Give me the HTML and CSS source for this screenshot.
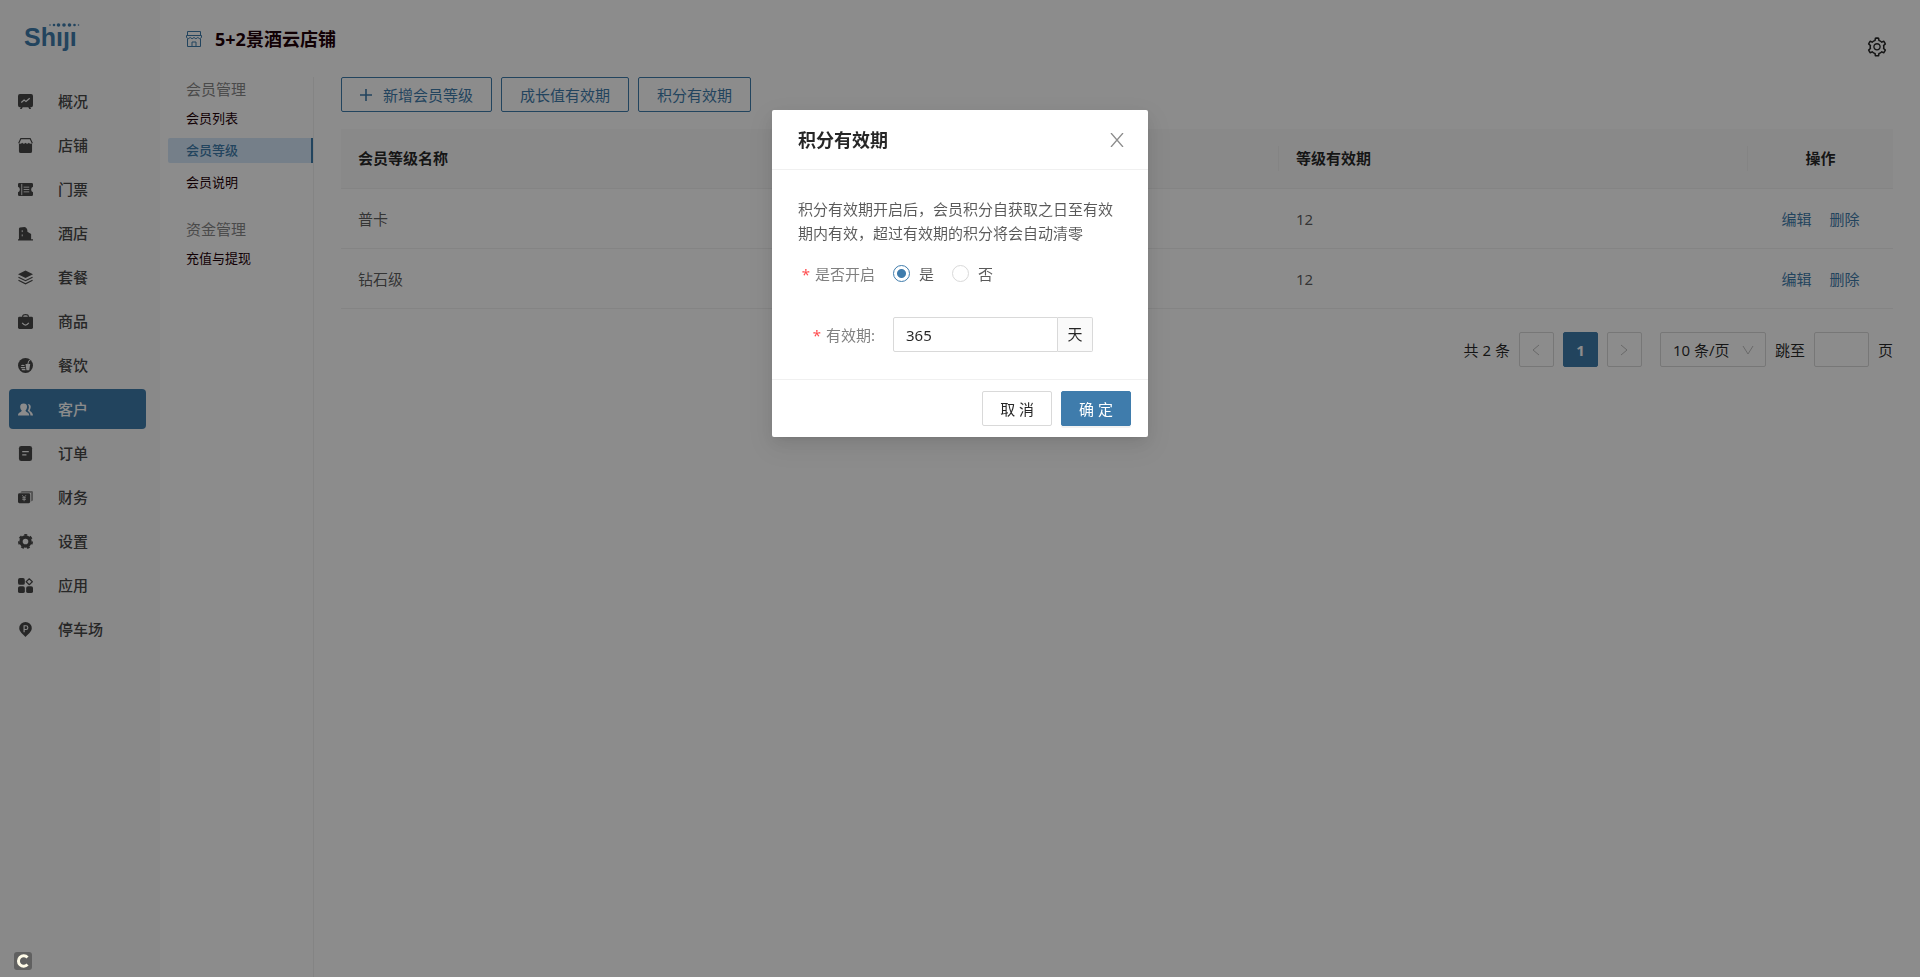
FILE: index.html
```html
<!DOCTYPE html>
<html lang="zh-CN">

<head>
    <meta charset="UTF-8">
    <meta name="viewport" content="width=device-width, initial-scale=1.0">
    <title>会员等级</title>
    <link rel="stylesheet" href="styles.css">
</head>

<body>
    <div class="layout">
        <aside class="sidebar">
            <svg class="logo" viewBox="0 0 70 40" role="img" aria-label="Shiji">
                <text class="logo-text" x="0" y="25">Shıȷı</text>
                <g fill="#3f7cac">
                    <circle cx="26" cy="4" r=".8"/>
                    <circle cx="30" cy="4" r="1.3"/>
                    <circle cx="34.5" cy="4" r="1.8"/>
                    <circle cx="40" cy="4" r="1.8"/>
                    <circle cx="45.5" cy="4" r="1.8"/>
                    <circle cx="50.5" cy="4" r="1.3"/>
                    <circle cx="54.5" cy="4" r=".8"/>
                </g>
            </svg>
            <nav class="menu">
                <a class="menu-item" href="#">
                    <svg viewBox="0 0 16 16"><path fill="currentColor" d="M2 0h12a2 2 0 0 1 2 2v10a2 2 0 0 1-2 2h-1l1 2h-2l-1-2H5l-1 2H2l1-2H2a2 2 0 0 1-2-2V2a2 2 0 0 1 2-2z"/><path d="M3.5 9l3-2.500 2 1.500 4-3.500" fill="none" stroke="#fafafa" stroke-width="1.300"/></svg>
                    <span>概况</span>
                </a>
                <a class="menu-item" href="#">
                    <svg viewBox="0 0 16 16"><path d="M.7 5.500L3 .7h10l2.300 4.800" fill="none" stroke="currentColor" stroke-width="1.200"/><path fill="currentColor" d="M1 5.500q1.800 1.500 3.500-.5 1.700 2 3.500 0 1.800 2 3.500 0 1.700 2 3.500.5V14a2 2 0 0 1-2 2H3a2 2 0 0 1-2-2z"/></svg>
                    <span>店铺</span>
                </a>
                <a class="menu-item" href="#">
                    <svg viewBox="0 0 16 16"><path fill="currentColor" d="M1.500 1h13A1.500 1.500 0 0 1 16 2.500V5q-2 .8-2 3t2 3v2.500a1.500 1.500 0 0 1-1.500 1.500h-13A1.500 1.500 0 0 1 0 13.500V11q2-.8 2-3T0 5V2.500A1.500 1.500 0 0 1 1.500 1z"/><path d="M6 5.500h6M6 8h6M6 10.500h6M4 2v12" stroke="#fafafa" stroke-width=".9"/></svg>
                    <span>门票</span>
                </a>
                <a class="menu-item" href="#">
                    <svg viewBox="0 0 16 16"><path fill="currentColor" d="M1 14V3q0-1 1-1.300L7 1q3 1 3 4v1l4 2.500V14h2v1.500H0V14z"/><path d="M4.500 4.500v2M4.500 9v2" stroke="#fafafa" stroke-width="1"/></svg>
                    <span>酒店</span>
                </a>
                <a class="menu-item" href="#">
                    <svg viewBox="0 0 16 16"><path fill="currentColor" d="M8 .5l8 4-8 4-8-4z"/><path d="M.5 7.700L8 11.400l7.500-3.700M.5 11L8 14.700 15.500 11" fill="none" stroke="currentColor" stroke-width="1.300"/></svg>
                    <span>套餐</span>
                </a>
                <a class="menu-item" href="#">
                    <svg viewBox="0 0 16 16"><path d="M5 4V2.500Q5 .7 8 .7t3 1.800V4" fill="none" stroke="currentColor" stroke-width="1.200"/><rect y="3" width="16" height="13" rx="1.500" fill="currentColor"/><path d="M4.500 9.500q3.500 4.500 7 0" fill="none" stroke="#fafafa" stroke-width="1.300"/></svg>
                    <span>商品</span>
                </a>
                <a class="menu-item" href="#">
                    <svg viewBox="0 0 16 16"><circle cx="8" cy="8" r="8" fill="currentColor"/><path fill="#fafafa" d="M8 6.500h5l-1 6.500H9zM3 8.500q2-2.500 4.500 0zM3 9.700h4.700v1H3zM3.500 11.500h4.300l.2 1.500H4.500z"/><path d="M10.500 6.500L11.500 3l1.500-.5" fill="none" stroke="#fafafa"/></svg>
                    <span>餐饮</span>
                </a>
                <a class="menu-item active" href="#">
                    <svg viewBox="0 0 16 16"><path fill="currentColor" d="M6 1.500c5 0 4 5.500 2 7.500 0 2 4 1.500 4 5.500H0c0-4 4-3.500 4-5.500-2-2-3-7.500 2-7.500z"/><path fill="currentColor" d="M10.500 2c4 0 3.500 4.500 2 6.500 0 2 3.500 2 3.500 6h-2.700c0-3-1.800-4-3-5.200 1.500-2 2-5 .2-7.300z"/></svg>
                    <span>客户</span>
                </a>
                <a class="menu-item" href="#">
                    <svg viewBox="0 0 16 16"><rect x="1" width="14" height="16" rx="2.500" fill="currentColor"/><path d="M4.500 6h7M4.500 9.500H9" stroke="#fafafa" stroke-width="1.300"/></svg>
                    <span>订单</span>
                </a>
                <a class="menu-item" href="#">
                    <svg viewBox="0 0 16 16"><path fill="currentColor" opacity=".55" d="M4 1h10.500A1.500 1.500 0 0 1 16 2.500v8a1.500 1.500 0 0 1-1.500 1.500H14V4q0-1-1-1H2.500z"/><rect y="3.500" width="13" height="10.500" rx="1.500" fill="currentColor"/><path d="M4.500 5.500l2 2.500 2-2.500M4.500 8.300h4M4.500 10h4M6.500 8v4" fill="none" stroke="#fafafa" stroke-width=".8"/></svg>
                    <span>财务</span>
                </a>
                <a class="menu-item" href="#">
                    <svg viewBox="0 0 16 16"><circle cx="8" cy="8" r="4.800" fill="none" stroke="currentColor" stroke-width="3.600"/><circle cx="8" cy="8" r="7.100" fill="none" stroke="currentColor" stroke-width="1.800" stroke-dasharray="3.200 3.173"/></svg>
                    <span>设置</span>
                </a>
                <a class="menu-item" href="#">
                    <svg viewBox="0 0 16 16"><g fill="currentColor"><rect width="7.300" height="7.300" rx="2"/><rect y="8.700" width="7.300" height="7.300" rx="2"/><rect x="8.700" y="8.700" width="7.300" height="7.300" rx="2"/></g><path d="M12 .8L15.300 4 12 7.200 8.700 4z" fill="none" stroke="currentColor" stroke-width="1.200" stroke-linejoin="round"/></svg>
                    <span>应用</span>
                </a>
                <a class="menu-item" href="#">
                    <svg viewBox="0 0 16 16"><path fill="currentColor" d="M8 0a6.700 6.700 0 0 1 6.700 6.700C14.700 10.500 10.500 13 8 16 5.500 13 1.300 10.500 1.300 6.700A6.700 6.700 0 0 1 8 0z"/><path d="M6.500 11V4h2a2 2 0 0 1 0 4h-2" fill="none" stroke="#fafafa" stroke-width="1.200"/></svg>
                    <span>停车场</span>
                </a>
            </nav>
        </aside>

        <div class="page">
            <header class="header">
                <svg class="shop-icon" viewBox="0 0 16 16" fill="none" stroke="currentColor"><path d="M1.500 4.500v-4h13v4M.5 4.500h15v2q-1.500 2.500-3.700 0-1.900 2.500-3.800 0-1.900 2.500-3.800 0-2.200 2.500-3.700 0zM1.500 8v7.500h13V8M6 15v-4h4v4"/></svg>
                <h1 class="shop-name">5+2景酒云店铺</h1>
                <button class="setting-btn" type="button" aria-label="设置">
                    <svg viewBox="0 0 1024 1024" fill="currentColor"><path d="M924.8 625.7l-65.5-56c3.1-19 4.7-38.4 4.7-57.8s-1.6-38.8-4.7-57.8l65.5-56a32.03 32.03 0 009.3-35.2l-.9-2.6a443.74 443.74 0 00-79.700-137.900l-1.8-2.1a32.12 32.12 0 00-35.100-9.500l-81.300 28.900c-30-24.600-63.500-44-99.700-57.600l-15.700-85a32.050 32.050 0 00-25.800-25.700l-2.700-.5c-52.100-9.400-106.900-9.400-159 0l-2.700.5a32.050 32.050 0 00-25.800 25.700l-15.800 85.400a351.860 351.860 0 00-99 57.400l-81.900-29.100a32 32 0 00-35.100 9.500l-1.800 2.100a446.020 446.020 0 00-79.700 137.900l-.9 2.600c-4.500 12.500-.8 26.500 9.300 35.200l66.300 56.600c-3.100 18.800-4.600 38-4.600 57.100 0 19.200 1.500 38.400 4.600 57.100L99 625.500a32.030 32.030 0 00-9.300 35.200l.9 2.600c18.100 50.400 44.900 96.900 79.700 137.900l1.800 2.100a32.120 32.120 0 0035.100 9.500l81.900-29.100c29.800 24.500 63.100 43.900 99 57.400l15.800 85.400a32.050 32.050 0 0025.800 25.700l2.700.5a449.400 449.400 0 00159 0l2.700-.5a32.050 32.050 0 0025.800-25.700l15.700-85a350 350 0 0099.700-57.600l81.300 28.900a32 32 0 0035.100-9.500l1.800-2.100c34.800-41.100 61.600-87.500 79.700-137.900l.9-2.600c4.500-12.300.8-26.300-9.300-35zM788.300 465.900c2.500 15.100 3.800 30.600 3.800 46.100s-1.300 31-3.800 46.100l-6.600 40.100 74.700 63.900a370.030 370.030 0 01-42.600 73.600L721 702.800l-31.400 25.800c-23.900 19.600-50.500 35-79.300 45.800l-38.100 14.300-17.900 97a377.500 377.500 0 01-85 0l-17.900-97.200-37.800-14.500c-28.500-10.800-55-26.200-78.700-45.700l-31.400-25.900-93.400 33.200c-17-22.900-31.200-47.600-42.600-73.600l75.500-64.500-6.500-40c-2.400-14.900-3.700-30.300-3.700-45.500 0-15.300 1.200-30.600 3.700-45.500l6.500-40-75.500-64.500c11.300-26.100 25.600-50.700 42.600-73.600l93.400 33.200 31.400-25.900c23.700-19.500 50.200-34.900 78.700-45.700l37.900-14.300 17.900-97.200c28.100-3.200 56.800-3.200 85 0l17.900 97 38.100 14.300c28.700 10.800 55.400 26.200 79.300 45.800l31.400 25.800 92.800-32.900c17 22.900 31.200 47.600 42.600 73.600L781.800 426l6.500 39.900zM512 326c-97.200 0-176 78.800-176 176s78.800 176 176 176 176-78.800 176-176-78.800-176-176-176zm79.200 255.200A111.600 111.600 0 01512 614c-29.900 0-58-11.700-79.200-32.800A111.600 111.600 0 01400 502c0-29.900 11.700-58 32.800-79.200C454 401.600 482.100 390 512 390c29.900 0 58 11.600 79.200 32.800A111.600 111.600 0 01624 502c0 29.900-11.700 58-32.800 79.200z"/></svg>
                </button>
            </header>

            <div class="body">
                <nav class="submenu">
                    <section class="submenu-group">
                        <h2 class="submenu-title">会员管理</h2>
                        <a class="submenu-item" href="#">会员列表</a>
                        <a class="submenu-item current" href="#">会员等级</a>
                        <a class="submenu-item" href="#">会员说明</a>
                    </section>
                    <section class="submenu-group">
                        <h2 class="submenu-title">资金管理</h2>
                        <a class="submenu-item" href="#">充值与提现</a>
                    </section>
                </nav>

                <main class="content">
                    <div class="toolbar">
                        <button class="btn btn-ghost" type="button">
                            <svg class="plus" viewBox="0 0 12 12"><path d="M6 0v12M0 6h12" stroke="currentColor" stroke-width="1.600"/></svg>
                            新增会员等级
                        </button>
                        <button class="btn btn-ghost" type="button">成长值有效期</button>
                        <button class="btn btn-ghost" type="button">积分有效期</button>
                    </div>

                    <table class="table">
                        <colgroup>
                            <col>
                            <col>
                            <col>
                            <col class="col-action">
                        </colgroup>
                        <thead>
                            <tr>
                                <th>会员等级名称</th>
                                <th></th>
                                <th>等级有效期</th>
                                <th class="center">操作</th>
                            </tr>
                        </thead>
                        <tbody>
                            <tr>
                                <td>普卡</td>
                                <td></td>
                                <td>12</td>
                                <td class="center"><a href="#">编辑</a><a href="#">删除</a></td>
                            </tr>
                            <tr>
                                <td>钻石级</td>
                                <td></td>
                                <td>12</td>
                                <td class="center"><a href="#">编辑</a><a href="#">删除</a></td>
                            </tr>
                        </tbody>
                    </table>

                    <div class="pagination">
                        <span>共 2 条</span>
                        <button class="page-btn" type="button" aria-label="上一页" disabled>
                            <svg viewBox="0 0 12 12"><path d="M9 1L3 6l6 5" fill="none" stroke="currentColor"/></svg>
                        </button>
                        <button class="page-btn page-current" type="button">1</button>
                        <button class="page-btn" type="button" aria-label="下一页" disabled>
                            <svg viewBox="0 0 12 12"><path d="M3 1l6 5-6 5" fill="none" stroke="currentColor"/></svg>
                        </button>
                        <div class="page-size">
                            <select aria-label="每页条数">
                                <option>10 条/页</option>
                            </select>
                            <svg viewBox="0 0 12 12"><path d="M1 2l5 8 5-8" fill="none" stroke="currentColor"/></svg>
                        </div>
                        <label for="jump">跳至</label>
                        <input class="page-jump" id="jump" type="text">
                        <span>页</span>
                    </div>
                </main>
            </div>
        </div>
    </div>

    <div class="mask">
        <div class="modal" role="dialog" aria-labelledby="modal-title">
            <div class="modal-header">
                <h2 class="modal-title" id="modal-title">积分有效期</h2>
                <button class="modal-close" type="button" aria-label="关闭">
                    <svg viewBox="0 0 14 14"><path d="M1 0l12 14M13 0L1 14" stroke="currentColor" stroke-width="1.300"/></svg>
                </button>
            </div>
            <form class="modal-body">
                <p class="modal-desc">积分有效期开启后，会员积分自获取之日至有效期内有效，超过有效期的积分将会自动清零</p>
                <div class="form-row">
                    <span class="form-label" id="enable-label">是否开启</span>
                    <div class="radio-group" role="radiogroup" aria-labelledby="enable-label">
                        <label class="radio"><input type="radio" name="enable" checked>是</label>
                        <label class="radio"><input type="radio" name="enable">否</label>
                    </div>
                </div>
                <div class="form-row">
                    <label class="form-label" for="days">有效期:</label>
                    <div class="input-group">
                        <input id="days" type="text" value="365">
                        <span class="addon">天</span>
                    </div>
                </div>
            </form>
            <div class="modal-footer">
                <button class="btn btn-default" type="button">取 消</button>
                <button class="btn btn-primary" type="button">确 定</button>
            </div>
        </div>
    </div>

    <div class="corner-badge">
        <svg viewBox="0 0 18 18"><path d="M13.500 5.500A5.200 5.200 0 1 0 13.500 12.500" fill="none" stroke="#fffbe8" stroke-width="3"/></svg>
    </div>
</body>

</html>
```
FILE: styles.css
```css
* {
    box-sizing: border-box;
}

body {
    margin: 0;
    font-family: "Noto Sans", "Noto Sans CJK SC", sans-serif;
    font-size: 15px;
    line-height: 24px;
    color: rgba(0, 0, 0, 0.85);
    background: #fff;
}

a {
    color: #3f7cac;
    text-decoration: none;
}

h1,
h2,
p {
    margin: 0;
}

button,
input,
select {
    font: inherit;
    color: inherit;
}

button {
    cursor: pointer;
}

svg {
    display: block;
}

.layout {
    display: flex;
    min-height: 100vh;
}

/* 左侧主菜单 */
.sidebar {
    flex: none;
    width: 160px;
    padding: 21px 14px 0 9px;
    background: #fafafa;
}

.logo {
    width: 70px;
    height: 40px;
    margin-left: 15px;
}

.logo-text {
    font-family: "Liberation Sans Narrow", "Liberation Sans", sans-serif;
    font-size: 25px;
    font-weight: 700;
    fill: #3f7cac;
}

.menu {
    display: flex;
    flex-direction: column;
    gap: 4px;
    margin-top: 20px;
}

.menu-item {
    display: flex;
    align-items: center;
    gap: 25px;
    height: 40px;
    padding: 0 9px;
    border-radius: 4px;
    color: #484848;
    font-weight: 500;
}

.menu-item svg {
    width: 15px;
    height: 15px;
}

.menu-item.active {
    color: #fff;
    background: #3f7cac;
}

/* 顶部 */
.page {
    flex: 1;
    min-width: 0;
    display: flex;
    flex-direction: column;
}

.header {
    display: flex;
    align-items: center;
    height: 77px;
    padding: 0 32px 0 26px;
}

.shop-icon {
    width: 16px;
    height: 16px;
    margin-right: 13px;
    color: #3f7cac;
}

.shop-name {
    flex: 1;
    font-size: 18px;
    font-weight: 700;
    color: #1f0008;
}

.setting-btn {
    align-self: flex-end;
    padding: 0;
    margin-bottom: 19px;
    border: none;
    background: none;
}

.setting-btn svg {
    width: 22px;
    height: 22px;
}

.body {
    flex: 1;
    display: flex;
}

/* 二级菜单 */
.submenu {
    flex: none;
    width: 154px;
    padding-left: 8px;
    border-right: 1px solid #f0f0f0;
}

.submenu-group {
    display: flex;
    flex-direction: column;
    gap: 7px;
    margin-bottom: 22px;
}

.submenu-title {
    height: 22px;
    padding-left: 18px;
    font-size: 15px;
    font-weight: 400;
    color: #888;
}

.submenu-item {
    height: 25px;
    padding-left: 18px;
    border-right: 2px solid transparent;
    border-radius: 2px 0 0 2px;
    font-size: 13px;
    color: #1f0008;
}

.submenu-item.current {
    color: #3f7cac;
    font-weight: 500;
    background: #d6e8f9;
    border-right-color: #3f7cac;
}

/* 内容区 */
.content {
    flex: 1;
    min-width: 0;
    padding: 0 27px;
}

.toolbar {
    display: flex;
    gap: 9px;
    margin-bottom: 17px;
}

.btn {
    display: flex;
    align-items: center;
    justify-content: center;
    height: 35px;
    padding: 0 17px;
    border: 1px solid #d9d9d9;
    border-radius: 2px;
    background: #fff;
}

.btn-ghost {
    padding: 0 18px;
    color: #3f7cac;
    border-color: #3f7cac;
}

.btn-primary {
    color: #fff;
    background: #3f7cac;
    border-color: #3f7cac;
    box-shadow: 0 2px 0 rgba(0, 0, 0, 0.05);
}

.plus {
    width: 12px;
    height: 12px;
    margin-right: 11px;
}

.table {
    width: 100%;
    table-layout: fixed;
    border-collapse: separate;
    border-spacing: 0;
}

.col-action {
    width: 145px;
}

.table th,
.table td {
    height: 60px;
    padding: 0 17px;
    border-bottom: 1px solid #f0f0f0;
    text-align: left;
}

.table th {
    position: relative;
    padding-bottom: 2px;
    font-weight: 700;
    background: #fafafa;
}

/* 表头列分隔线 */
.table th:not(:last-child)::after {
    content: "";
    position: absolute;
    top: 17px;
    right: 0;
    width: 1px;
    height: 25px;
    background: #f0f0f0;
}

.table td {
    color: rgba(0, 0, 0, 0.65);
}

.table .center {
    text-align: center;
}

.table td a + a {
    margin-left: 18px;
}

.pagination {
    display: flex;
    align-items: center;
    justify-content: flex-end;
    gap: 9px;
    margin-top: 23px;
}

.page-btn {
    display: flex;
    align-items: center;
    justify-content: center;
    width: 35px;
    height: 35px;
    padding: 0;
    border: 1px solid #d9d9d9;
    border-radius: 2px;
    color: #bfbfbf;
    background: #fff;
}

.page-btn svg {
    width: 12px;
    height: 12px;
}

.page-current {
    color: #fff;
    font-weight: 700;
    background: #3f7cac;
    border-color: #3f7cac;
}

.page-size {
    display: grid;
    align-items: center;
    width: 106px;
    margin-left: 9px;
}

.page-size select,
.page-size svg {
    grid-area: 1 / 1;
}

.page-size select {
    width: 100%;
    height: 35px;
    padding: 0 12px;
    border: 1px solid #d9d9d9;
    border-radius: 2px;
    background: #fff;
    appearance: none;
}

.page-size svg {
    justify-self: end;
    width: 12px;
    height: 12px;
    margin-right: 12px;
    color: #bfbfbf;
    pointer-events: none;
}

.page-jump {
    width: 55px;
    height: 35px;
    border: 1px solid #d9d9d9;
    border-radius: 2px;
}

/* 弹窗 */
.mask {
    position: fixed;
    inset: 0;
    display: flex;
    align-items: flex-start;
    justify-content: center;
    padding-top: 110px;
    background: rgba(0, 0, 0, 0.45);
}

.modal {
    width: 376px;
    border-radius: 2px;
    background: #fff;
    box-shadow: 0 3px 6px -4px rgba(0, 0, 0, 0.12), 0 6px 16px rgba(0, 0, 0, 0.08), 0 9px 28px 8px rgba(0, 0, 0, 0.05);
}

.modal-header {
    display: flex;
    align-items: center;
    justify-content: space-between;
    height: 60px;
    padding: 0 24px 0 26px;
    border-bottom: 1px solid #f0f0f0;
}

.modal-title {
    font-size: 18px;
    font-weight: 700;
}

.modal-close {
    padding: 0;
    border: none;
    background: none;
    color: #8c8c8c;
}

.modal-close svg {
    width: 14px;
    height: 14px;
}

.modal-body {
    padding: 27px 26px;
    color: rgba(0, 0, 0, 0.65);
}

.modal-desc {
    margin-bottom: 11px;
}

.form-row {
    display: flex;
    align-items: center;
    gap: 18px;
    height: 35px;
}

.form-row + .form-row {
    margin-top: 26px;
}

.form-label {
    width: 77px;
    text-align: right;
    color: #808080;
}

.form-label::before {
    content: "*";
    margin-right: 5px;
    color: #ff4d4f;
}

.radio-group {
    display: flex;
    gap: 18px;
}

.radio {
    display: flex;
    align-items: center;
    gap: 9px;
}

.radio input {
    appearance: none;
    width: 17px;
    height: 17px;
    margin: 0;
    border: 1px solid #d9d9d9;
    border-radius: 50%;
}

.radio input:checked {
    border-color: #3f7cac;
    background: radial-gradient(circle, #3f7cac 4px, #fff 5px);
}

.input-group {
    display: flex;
    width: 200px;
    color: rgba(0, 0, 0, 0.85);
}

.input-group input {
    flex: 1;
    min-width: 0;
    height: 35px;
    padding: 0 12px;
    border: 1px solid #d9d9d9;
    border-radius: 2px 0 0 2px;
}

.addon {
    width: 35px;
    line-height: 33px;
    border: 1px solid #d9d9d9;
    border-left: none;
    border-radius: 0 2px 2px 0;
    text-align: center;
    background: #fafafa;
}

.modal-footer {
    display: flex;
    justify-content: flex-end;
    gap: 9px;
    padding: 11px 17px;
    border-top: 1px solid #f0f0f0;
}

/* 左下角浮标 */
.corner-badge {
    position: fixed;
    left: 14px;
    bottom: 7px;
    border-radius: 3px;
    background: #606060;
}

.corner-badge svg {
    width: 18px;
    height: 18px;
}
```
